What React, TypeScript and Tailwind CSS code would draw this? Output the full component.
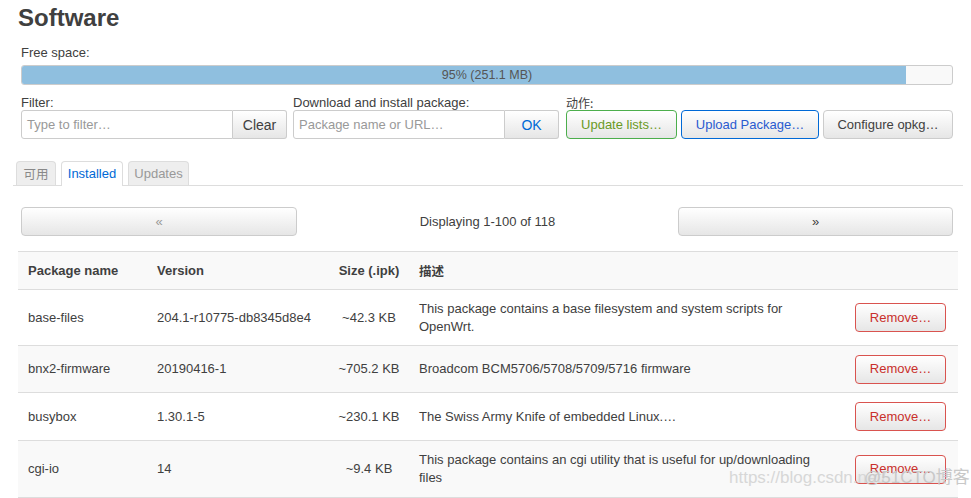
import React from "react";

const rows = [
  { name: "base-files", ver: "204.1-r10775-db8345d8e4", size: "~42.3 KB", desc: "This package contains a base filesystem and system scripts for OpenWrt.", h: "h-[56px]", bg: "bg-white" },
  { name: "bnx2-firmware", ver: "20190416-1", size: "~705.2 KB", desc: "Broadcom BCM5706/5708/5709/5716 firmware", h: "h-[47px]", bg: "bg-[#f9f9f9]" },
  { name: "busybox", ver: "1.30.1-5", size: "~230.1 KB", desc: "The Swiss Army Knife of embedded Linux.…", h: "h-[48px]", bg: "bg-white" },
  { name: "cgi-io", ver: "14", size: "~9.4 KB", desc: "This package contains an cgi utility that is useful for up/downloading files", h: "h-[57px]", bg: "bg-[#f9f9f9]" },
];

const btn = "h-[29px] rounded-[4px] border bg-gradient-to-b from-white to-[#e6e6e6] text-[13px] flex items-center justify-center";

export default function App() {
  return (
    <div className="relative w-[971px] h-[498px] overflow-hidden bg-white text-[#404040] font-['Liberation_Sans',Arial,sans-serif] text-[13px] leading-[18px]">
      <h2 className="pl-[18px] pt-[4px] text-[24px] leading-[28px] font-bold text-[#404040]">Software</h2>

      <div className="px-[21px] mt-[13px] w-[971px] pr-[18px]">
        <div className="h-[16px] leading-[16px]">Free space:</div>
        <div className="relative mt-[4px] h-[20px] rounded-[3px] border border-[#ccc] bg-[#f9f9f9] overflow-hidden">
          <div className="h-full w-[95%] bg-[#8fbfdf]" />
          <div className="absolute inset-0 flex items-center justify-center text-[12.5px] text-[#555]">95% (251.1 MB)</div>
        </div>

        <div className="mt-[7px] grid grid-cols-[266px_266px_1fr] gap-x-[6px]">
          <div>
            <div className="h-[18px] leading-[18px] pt-[2px]">Filter:</div>
            <div className="flex h-[29px]">
              <div className="flex-1 rounded-l-[3px] border border-[#ccc] bg-white px-[5px] flex items-center text-[#999] text-[13px]">Type to filter…</div>
              <div className="w-[54px] rounded-r-[3px] border border-l-0 border-[#ccc] bg-gradient-to-b from-white to-[#e6e6e6] flex items-center justify-center text-[14px] text-[#404040]">Clear</div>
            </div>
          </div>
          <div>
            <div className="h-[18px] leading-[18px] pt-[2px]">Download and install package:</div>
            <div className="flex h-[29px]">
              <div className="flex-1 rounded-l-[3px] border border-[#ccc] bg-white px-[5px] flex items-center text-[#999] text-[13px]">Package name or URL…</div>
              <div className="w-[54px] rounded-r-[3px] border border-l-0 border-[#ccc] bg-gradient-to-b from-white to-[#e6e6e6] flex items-center justify-center text-[14px] text-[#0069d6]">OK</div>
            </div>
          </div>
          <div className="pl-[1px]">
            <div className="h-[18px] leading-[18px] pt-[2px] font-['Noto_Sans_CJK_SC',sans-serif] text-[12px]">动作:</div>
            <div className="flex gap-[4px]">
              <div className={`${btn} w-[111px] border-[#4cae4c] text-[#6a9a1f]`}>Update lists…</div>
              <div className={`${btn} w-[138px] border-[#0069d6] text-[#2a5bd0]`}>Upload Package…</div>
              <div className={`${btn} w-[130px] border-[#ccc] text-[#404040]`}>Configure opkg…</div>
            </div>
          </div>
        </div>
      </div>

      <div className="mt-[22px] mx-[13px] w-[950px] flex items-end gap-[5px] pl-[3px] border-b border-[#ddd] h-[25px]">
        <div className="h-[24px] w-[40px] rounded-t-[4px] border border-b-0 border-[#ddd] bg-[#eee] flex items-center justify-center text-[#888] font-['Noto_Sans_CJK_SC',sans-serif] text-[12.5px]">可用</div>
        <div className="relative -mb-px h-[25px] w-[62px] rounded-t-[4px] border border-b-0 border-[#ddd] bg-white flex items-center justify-center text-[#0069d6]">Installed</div>
        <div className="h-[24px] w-[61px] rounded-t-[4px] border border-b-0 border-[#ddd] bg-[#eee] flex items-center justify-center text-[#999]">Updates</div>
      </div>

      <div className="mt-[21px] ml-[21px] w-[932px] grid grid-cols-[276px_1fr_275px] items-center">
        <div className={`${btn} h-[28px] border-[#ccc] text-[#999]`}>«</div>
        <div className="text-center text-[#404040]">Displaying 1-100 of 118</div>
        <div className={`${btn} h-[28px] border-[#ccc] text-[#404040]`}>»</div>
      </div>

      <div className="mt-[15px] ml-[18px] w-[940px]">
        <div className="grid grid-cols-[129px_182px_80px_436px_113px] h-[38px] items-center border-t border-[#ddd] bg-[#f9f9f9] font-bold">
          <div className="px-[10px]">Package name</div>
          <div className="px-[10px]">Version</div>
          <div className="px-[2px] text-center">Size (.ipk)</div>
          <div className="px-[10px] font-['Noto_Sans_CJK_SC',sans-serif] text-[12.5px]">描述</div>
          <div />
        </div>
        {rows.map((r) => (
          <div key={r.name} className={`grid grid-cols-[129px_182px_80px_436px_113px] ${r.h} items-center border-t border-[#ddd] ${r.bg}`}>
            <div className="px-[10px]">{r.name}</div>
            <div className="px-[10px]">{r.ver}</div>
            <div className="px-[2px] text-center">{r.size}</div>
            <div className="px-[10px]">{r.desc}</div>
            <div className="pl-[10px]">
              <div className={`${btn} h-[28px] w-[91px] border-[#d9534f] text-[#c9302c]`}>Remove…</div>
            </div>
          </div>
        ))}
        <div className="border-t border-[#ddd]" />
      </div>

      <div className="absolute left-[729px] top-[468px] text-[17px] leading-[20px] text-[#d7d7d7] whitespace-nowrap">https://blog.csdn.net/</div>
      <div className="absolute left-[864px] top-[468px] text-[17px] leading-[20px] text-[#c8c8c8] whitespace-nowrap font-['Liberation_Sans','Noto_Sans_CJK_SC',sans-serif]">@51CTO博客</div>
    </div>
  );
}
